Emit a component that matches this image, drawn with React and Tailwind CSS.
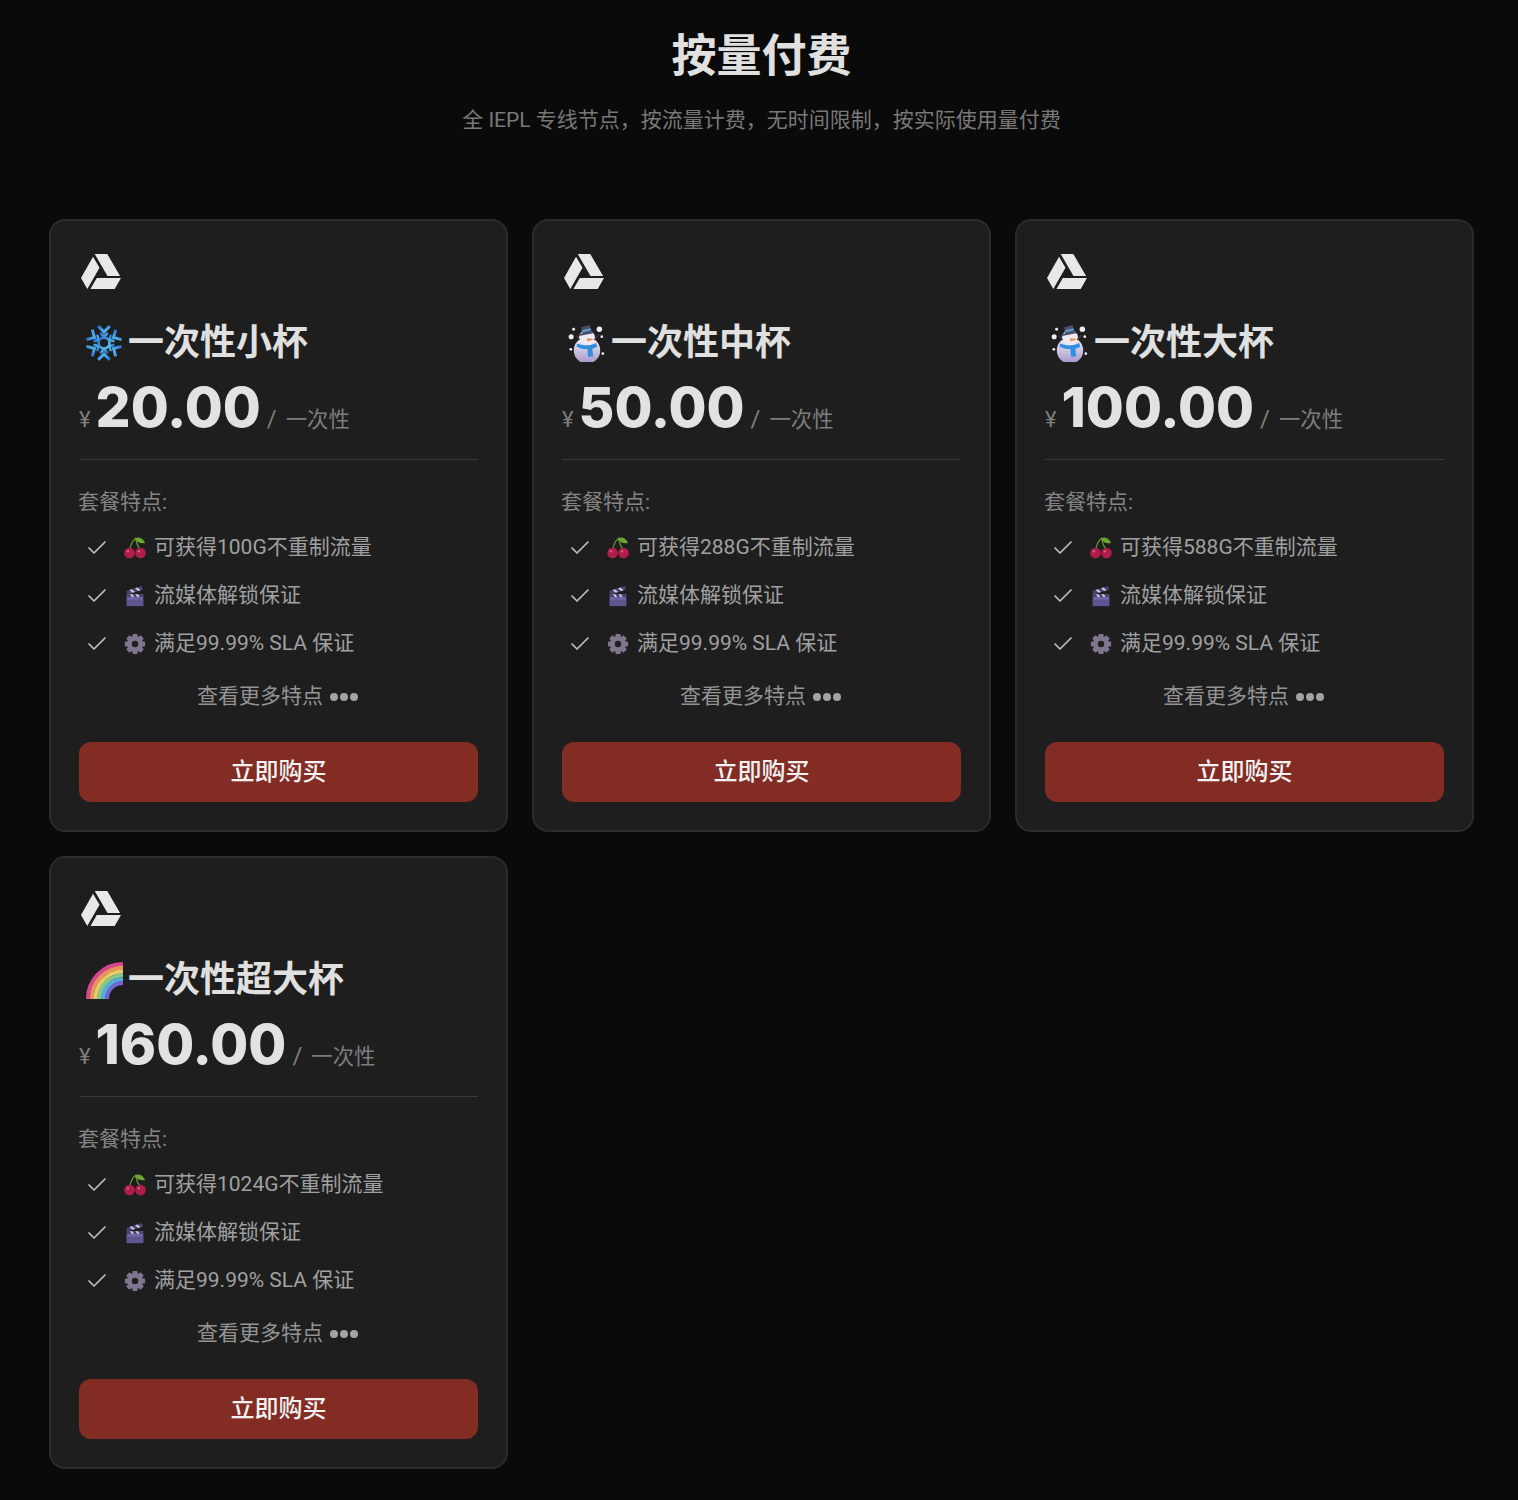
import React from 'react';
import { Check } from 'lucide-react';
import { FaGoogleDrive } from 'react-icons/fa';

const Snowflake = () => (
    <svg viewBox="0 0 36 36" className="w-full h-full" fill="none">
        <defs>
            <linearGradient id="flake" x1="0" y1="0" x2="1" y2="1">
                <stop offset="0" stopColor="#2b6fd2" />
                <stop offset="1" stopColor="#5cc6f0" />
            </linearGradient>
        </defs>
        <g stroke="url(#flake)" strokeWidth="3.2">
            {[0, 60, 120, 180, 240, 300].map((a) => (
                <g key={a} transform={`rotate(${a} 18 18)`}>
                    <path d="M18 13V0.5" />
                    <path d="M12.500 2 18 7.500 23.500 2" strokeWidth="2.800" />
                    <path d="M14.500 8.500 18 12l3.500-3.500" strokeWidth="2.400" />
                </g>
            ))}
            <circle cx="18" cy="18" r="5.200" strokeWidth="2.600" />
        </g>
    </svg>
);

const Snowman = () => (
    <svg viewBox="0 0 36 36" className="w-full h-full">
        <defs>
            <linearGradient id="snow" x1="0" y1="0" x2="0" y2="1">
                <stop offset="0" stopColor="#f4f0f6" />
                <stop offset="1" stopColor="#a596c9" />
            </linearGradient>
        </defs>
        <circle cx="18" cy="25" r="12.500" fill="url(#snow)" />
        <circle cx="18" cy="13" r="7.500" fill="#efeaf2" />
        <path d="M10 9.500l13.500-2.500.4 1.800L10.500 11.300z" fill="#4a4f6a" />
        <path d="M12.500 3 20.500 1l2 6.500-9 2z" fill="#4b4f68" />
        <path d="M13.300 6 21.300 4l.6 2-8.200 2z" fill="#5a9fd6" />
        <path d="M18 13.500l7 .7-6.500 2.300z" fill="#f08a3c" />
        <path d="M8.800 18.500c4.500 2.400 13 2.400 18 -.5l.8 3.500c-1.400 1-3 1.600-4.600 1.900l.9 7.200-4.900.6-.6-7.500c-3.900.1-7.700-.7-10.400-2.400z" fill="#2f8fe0" />
        <path d="M25 15 28.500 10.500M11 15 8 11" stroke="#4b3f55" strokeWidth="1" />
        <g fill="#f1edf4">
            <circle cx="3" cy="12" r="2.400" />
            <circle cx="5.300" cy="5" r="1.400" />
            <circle cx="29.700" cy="5" r="2.600" />
            <circle cx="32" cy="12" r="1.300" />
            <circle cx="2.700" cy="24" r="1.300" />
            <circle cx="33" cy="28" r="1.300" />
        </g>
    </svg>
);

const Rainbow = () => (
    <svg viewBox="0 0 36 36" className="w-full h-full" fill="none">
        {[
            [33.200, '#d8468f'],
            [29.600, '#e8955c'],
            [26, '#ebc86a'],
            [22.400, '#83c98a'],
            [18.800, '#55aede'],
            [15.200, '#7268cf'],
        ].map(([r, c]) => (
            <path key={c} d={`M${36 - r} 36A${r} ${r} 0 0 1 36 ${36 - r}`} stroke={c} strokeWidth="3.800" />
        ))}
    </svg>
);

const Cherries = () => (
    <svg viewBox="0 0 24 24" className="w-full h-full">
        <path d="M6 15C7 9 9 4 12.500 1.500 13.500 7 15.500 11 18 15" fill="none" stroke="#6c9a2e" strokeWidth="1.300" />
        <path d="M12 1.500c3.500-2 8.500-.5 11 5-4.500 1-9 -.5-11-5z" fill="#6ea52f" />
        <circle cx="6" cy="17.500" r="5.800" fill="#b01d48" />
        <circle cx="18" cy="17.500" r="5.800" fill="#b01d48" />
        <circle cx="4.300" cy="15.500" r="1.300" fill="#d65a7e" />
        <circle cx="16.300" cy="15.500" r="1.300" fill="#d65a7e" />
    </svg>
);

const Clapper = () => (
    <svg viewBox="0 0 24 24" className="w-full h-full">
        <path d="M3 10h18v13H3z" fill="#6f68a8" />
        <path d="M3 16h18v7H3z" fill="#5d5690" />
        <path d="M2.500 6.500 19.500 1l1.300 4L3.500 10.500z" fill="#4c4470" />
        <path d="M6 5.500 9.500 8.500l2.600-.9L8.600 4.700zM12 3.600 15.500 6.500l2.600-.8L14.600 2.800z" fill="#cfcae2" />
        <path d="M3 10h18v3.200H3z" fill="#4c4470" />
        <path d="M6.500 10l2 3.200h2.600l-2-3.200zM12.500 10l2 3.200h2.600l-2-3.200z" fill="#cfcae2" />
    </svg>
);

const Gear = () => (
    <svg viewBox="0 0 24 24" className="w-full h-full" fill="none">
        {[0, 45, 90, 135, 180, 225, 270, 315].map((a) => (
            <path key={a} d="M9.500 1h5l.8 5h-6.600z" fill="#80758f" transform={`rotate(${a} 12 12)`} />
        ))}
        <circle cx="12" cy="12" r="6" stroke="#80758f" strokeWidth="5" />
    </svg>
);

const plans = [
    { id: 'small', name: '一次性小杯', emoji: <Snowflake />, price: '20.00', traffic: '100G' },
    { id: 'medium', name: '一次性中杯', emoji: <Snowman />, price: '50.00', traffic: '288G' },
    { id: 'large', name: '一次性大杯', emoji: <Snowman />, price: '100.00', traffic: '588G' },
    { id: 'xlarge', name: '一次性超大杯', emoji: <Rainbow />, price: '160.00', traffic: '1024G' },
];

const FeatureRow = ({ icon, children }) => (
    <li className="flex items-center h-12">
        <Check className="w-6 h-6 ml-[6px] text-[#bdbdbd] shrink-0" strokeWidth={1.75} />
        <span className="w-[22px] h-[22px] ml-[15px] shrink-0">{icon}</span>
        <span className="ml-[8px]">{children}</span>
    </li>
);

const PlanCard = ({ plan }) => (
    <div className="bg-[#1e1e1e] border-2 border-[#2b2b2b] rounded-2xl px-[28px] pt-[30px] pb-[28px] h-[613px]">
        <FaGoogleDrive className="w-[40px] h-[41px] ml-[2px] text-[#e8e8e8]" />
        <h3 className="flex items-center h-[48px] mt-[27px] text-[36px] font-bold text-[#e0e0e0]">
            <span className="w-[38px] h-[38px] ml-[6px] mr-[5px] shrink-0">{plan.emoji}</span>
            {plan.name}
        </h3>
        <div className="flex items-baseline h-[72px] mt-[4px] text-[#7d7d7d]">
            <span className="text-[22px] mr-[5px]">¥</span>
            <span className="text-[55px] leading-[72px] font-extrabold text-[#e2e2e2] font-['Inter','Noto_Sans_CJK_SC',sans-serif]">{plan.price}</span>
            <span className="text-[24px] ml-[6px]">/</span>
            <span className="text-[21.33px] ml-[9px]">一次性</span>
        </div>
        <div className="border-t border-[#3a3a3a] mt-[16px]" />
        <p className="mt-[26px] -ml-px h-[32px] leading-[32px] text-[21px] text-[#858585]">套餐特点:</p>
        <ul className="mt-[6px] text-[21px] text-[#a0a0a0]">
            <FeatureRow icon={<Cherries />}>可获得{plan.traffic}不重制流量</FeatureRow>
            <FeatureRow icon={<Clapper />}>流媒体解锁保证</FeatureRow>
            <FeatureRow icon={<Gear />}>满足99.99% SLA 保证</FeatureRow>
        </ul>
        <div className="flex items-center justify-center h-[32px] mt-[13px] mr-[2px] text-[21px] text-[#949494]">
            查看更多特点
            <span className="flex gap-[2px] ml-[7px]">
                <i className="w-2 h-2 rounded-full bg-[#a3a3a3]" />
                <i className="w-2 h-2 rounded-full bg-[#a3a3a3]" />
                <i className="w-2 h-2 rounded-full bg-[#a3a3a3]" />
            </span>
        </div>
        <button className="w-full h-[60px] mt-[29px] rounded-xl bg-[#822c24] text-[24px] font-medium text-[#f2f2f2]">
            立即购买
        </button>
    </div>
);

export default function App() {
    return (
        <div className="min-h-screen bg-[#0a0a0a] pl-[49px] pr-[44px] pb-[31px] pt-[25px] font-['Roboto','Noto_Sans_CJK_SC',sans-serif]">
            <h1 className="text-center text-[45px] leading-[64px] font-bold text-[#e0e0e0]">按量付费</h1>
            <p className="text-center mt-[15px] text-[21px] leading-[32px] text-[#787878]">
                全 IEPL 专线节点，按流量计费，无时间限制，按实际使用量付费
            </p>
            <div className="grid grid-cols-3 gap-x-6 gap-y-6 mt-[83px] w-[1425px]">
                {plans.map((plan) => (
                    <PlanCard key={plan.id} plan={plan} />
                ))}
            </div>
        </div>
    );
}
